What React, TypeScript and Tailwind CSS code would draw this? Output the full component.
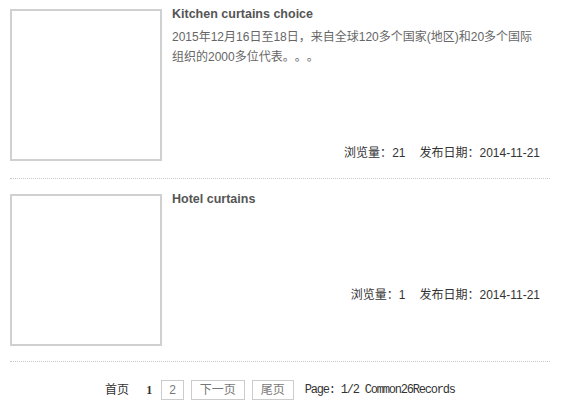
const sans = "font-['Liberation_Sans','Noto_Sans_CJK_SC',sans-serif]";

type Item = {
  title: string;
  lines: string[];
  views: number;
  date: string;
};

const items: Item[] = [
  {
    title: 'Kitchen curtains choice',
    lines: ['2015年12月16日至18日，来自全球120多个国家(地区)和20多个国际', '组织的2000多位代表。。。'],
    views: 21,
    date: '2014-11-21',
  },
  { title: 'Hotel curtains', lines: [], views: 1, date: '2014-11-21' },
];

function NewsItem({ item, first }: { item: Item; first: boolean }) {
  return (
    <div
      className={`flex items-start border-b border-dotted border-[#c8c8c8] ${first ? 'pt-[4px] pb-[17px]' : 'pt-[10px] pb-[15px]'}`}
    >
      <div className="mt-[5px] h-[152px] w-[152px] shrink-0 border-2 border-[#d0d0d0] bg-white" />
      <div className="ml-[10px] flex-1 pr-[10px]">
        <h3 className="text-[12.5px] font-bold leading-[20px] text-[#555]">{item.title}</h3>
        <p className="mt-[3px] text-[12px] leading-[20px] text-[#666] [text-spacing-trim:space-all]">
          {item.lines.map((l, i) => (
            <span key={i} className="block whitespace-nowrap">
              {l}
            </span>
          ))}
        </p>
        <div className="mt-[78px] text-right text-[12px] leading-[16px] text-[#333]">
          浏览量：{item.views}
          <span className="ml-[14px]">发布日期：{item.date}</span>
        </div>
      </div>
    </div>
  );
}

export default function App() {
  return (
    <div className={`h-[406px] w-[572px] bg-white ${sans}`}>
      <div className="ml-[10px] w-[540px]">
        {items.map((it, i) => (
          <NewsItem key={i} item={it} first={i === 0} />
        ))}
        <div className="flex items-center justify-center pt-[18px] text-[12px] text-[#333]">
          <span className="leading-[20px]">首页</span>
          <span className="ml-[17px] font-['Liberation_Serif',serif] font-bold leading-[20px]">1</span>
          <a className="ml-[9px] border border-[#ccc] px-[7px] leading-[18px] text-[#777]">2</a>
          <a className="ml-[7px] border border-[#ccc] px-[8px] leading-[18px] text-[#777]">下一页</a>
          <a className="ml-[7px] border border-[#ccc] px-[8px] leading-[18px] text-[#777]">尾页</a>
          <span className="ml-[11px] font-['Liberation_Mono',monospace] tracking-[-1.2px] leading-[20px] text-[#333]">
            Page: 1/2 Common26Records
          </span>
        </div>
      </div>
    </div>
  );
}
